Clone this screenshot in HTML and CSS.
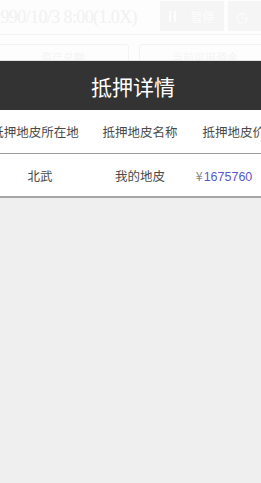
FILE: index.html
```html
<!DOCTYPE html>
<html lang="zh-CN">
<head>
  <meta charset="UTF-8">
  <meta name="viewport" content="width=device-width, initial-scale=1.0">
  <title>抵押详情</title>
  <link rel="stylesheet" href="styles.css">
</head>
<body>
  <!-- faded page behind the sheet -->
  <div class="behind">
    <div class="topbar">
      <span class="clock">1990/10/3 8:00(1.0X)</span>
      <div class="btn btn-pause"><span class="pause-icon"></span>暂停</div>
      <div class="btn btn-speed">◷</div>
    </div>
    <div class="cards">
      <div class="card">资产总额</div>
      <div class="card">当前可用资金</div>
    </div>
  </div>

  <div class="sheet">
    <div class="sheet-title">抵押详情</div>
    <div class="table">
      <div class="row head">
        <div class="cell first">抵押地皮所在地</div>
        <div class="cell">抵押地皮名称</div>
        <div class="cell">抵押地皮价值</div>
      </div>
      <div class="row body last">
        <div class="cell">北武</div>
        <div class="cell">我的地皮</div>
        <div class="cell price"><span class="yen">¥</span><span class="amount">1675760</span></div>
      </div>
    </div>
  </div>
</body>
</html>
```

FILE: styles.css
```css
body {
  margin: 0;
  padding: 0;
  background-color: #efefef;
  font-family: "Noto Sans CJK SC", "Liberation Sans", sans-serif;
  overflow: hidden;
}
.behind {
  height: 60px;
  background: #fdfdfd;
  overflow: hidden;
}
.topbar {
  height: 34px;
  display: flex;
  align-items: center;
  border-bottom: 1px solid #f4f4f4;
}
.clock {
  font-family: "Liberation Serif", serif;
  font-size: 18px;
  color: #f1f1f1;
  margin-left: -8px;
  margin-right: auto;
  white-space: nowrap;
  letter-spacing: -0.6px;
}
.btn {
  box-sizing: border-box;
  height: 30px;
  background: #f5f5f5;
  border-radius: 2px;
  color: #fdfdfd;
  font-size: 12px;
  display: flex;
  align-items: center;
  align-self: flex-start;
  margin-top: 1px;
}
.btn-pause {
  width: 64px;
  justify-content: center;
  gap: 14px;
}
.pause-icon {
  width: 3px;
  height: 11px;
  border-left: 2px solid #fdfdfd;
  border-right: 2px solid #fdfdfd;
}
.btn-speed {
  width: 40px;
  margin-left: 4px;
  margin-right: -7px;
  padding-left: 8px;
  font-size: 14px;
}
.cards {
  display: flex;
  gap: 10px;
  padding-top: 9px;
  margin-left: -3px;
}
.card {
  flex: 1;
  height: 30px;
  border: 1px solid #f3f3f3;
  border-radius: 3px;
  font-size: 11px;
  color: #f4f4f4;
  text-align: center;
  padding-top: 4px;
}
.card + .card {
  margin-right: -10px;
}
.sheet {
  background: #fff;
  border-top: 1px solid #e2e2e2;
}
.sheet-title {
  height: 49px;
  background: #333;
  color: #fff;
  font-size: 21px;
  display: flex;
  align-items: center;
  justify-content: center;
  padding-left: 5px;
}
.table {
  overflow: hidden;
}
.row {
  display: grid;
  grid-template-columns: 100px 100px 100px;
  margin-left: -10px;
  height: 43px;
  align-items: center;
  border-bottom: 1px solid #9c9c9c;
  white-space: nowrap;
}
.row.last {
  height: 42px;
  border-bottom: 2px solid #a6a6a6;
}
.cell {
  text-align: center;
  font-size: 12.5px;
  color: #4a4a4a;
}
.head .first {
  padding-right: 10px;
}
.price {
  padding-right: 32px;
}
.yen {
  color: #8a8a8a;
  margin-right: 1px;
}
.amount {
  font-family: "Liberation Sans", sans-serif;
  color: #5858d2;
}
```
